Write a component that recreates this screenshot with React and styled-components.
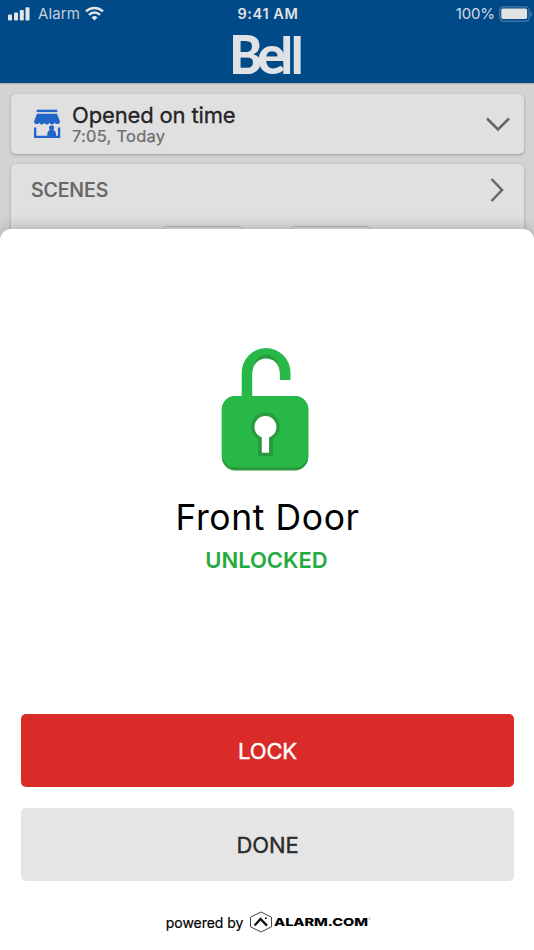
import React from "react";
import styled, { createGlobalStyle } from "styled-components";

const GlobalStyle = createGlobalStyle`
  *, *::before, *::after { box-sizing: border-box; }
  html, body { margin: 0; padding: 0; }
  body { overflow: hidden; font-family: Inter, "Liberation Sans", sans-serif; }
  svg { display: block; flex: none; overflow: visible; }
`;

const Screen = styled.main`
  position: relative;
  width: 534px;
  height: 950px;
  overflow: hidden;
  background: #d3d3d3;
`;

const Header = styled.header`
  height: 83px;
  background: #004b87;
  color: #e0e2e5;
  box-shadow: 0 1px 1px rgba(0, 0, 0, 0.15);
`;

const StatusBar = styled.div`
  display: grid;
  grid-template-columns: 1fr auto 1fr;
  align-items: center;
  height: 27px;
  padding: 0 2px 0 8px;
  font-size: 15px;
  line-height: 27px;
`;

const StatusGroup = styled.div`
  display: flex;
  align-items: center;
  justify-content: ${(p) => (p.$end ? "flex-end" : "flex-start")};
  gap: ${(p) => p.$gap}px;
`;

const Carrier = styled.span`
  color: #c3d0dd;
  letter-spacing: 0.1px;
`;

const Clock = styled.time`
  margin-right: 4px;
  font-weight: 600;
  font-size: 14.5px;
  letter-spacing: 0.6px;
`;

const Percent = styled.span`
  color: #d3dbe2;
  letter-spacing: -0.1px;
`;

const LogoRow = styled.div`
  display: flex;
  justify-content: center;
  height: 56px;
`;

const Content = styled.div`
  display: flex;
  flex-direction: column;
  gap: 10px;
  padding: 11px 10.5px 0 10.5px;
`;

const Card = styled.section`
  height: ${(p) => p.$height}px;
  border-radius: 5px;
  background: #e0e0e0;
  box-shadow: 0 1px 3px rgba(0, 0, 0, 0.28);
`;

const StatusRow = styled.div`
  display: flex;
  align-items: center;
  height: 100%;
  padding: 0 14px 0 22px;
`;

const StatusText = styled.div`
  flex: 1;
  padding-left: 11.5px;
`;

const StatusTitle = styled.div`
  color: #242424;
  font-size: 22px;
  line-height: 24px;
  letter-spacing: -0.15px;
  white-space: nowrap;
  -webkit-text-stroke: 0.3px currentColor;
`;

const StatusTime = styled.div`
  color: #6c6c6c;
  font-size: 16.5px;
  line-height: 19px;
  letter-spacing: 0.25px;
  -webkit-text-stroke: 0.2px currentColor;
`;

const ScenesHeader = styled.div`
  display: flex;
  align-items: center;
  justify-content: space-between;
  height: 52px;
  padding: 0 20px 0 20.5px;
`;

const SectionTitle = styled.h2`
  margin: 0;
  color: #666;
  font-size: 19.5px;
  font-weight: 500;
  letter-spacing: -0.1px;
  -webkit-text-stroke: 0.2px currentColor;
`;

const SceneTiles = styled.div`
  display: flex;
  justify-content: center;
  gap: 46px;
  padding-top: 10px;
`;

const SceneTile = styled.div`
  width: 82px;
  height: 60px;
  border: 1px solid #bdbdbd;
  border-radius: 5px;
`;

const Sheet = styled.section`
  position: absolute;
  inset: 229px 0 0;
  display: flex;
  flex-direction: column;
  align-items: center;
  padding: 118px 20px 0 21px;
  border-radius: 11px 11px 0 0;
  background: #fff;
  box-shadow: 0 0 16px rgba(0, 0, 0, 0.28);
`;

const DeviceName = styled.h1`
  margin: 24px 0 0;
  color: #000;
  font-size: 35.5px;
  font-weight: 400;
  line-height: 46px;
  letter-spacing: 0.6px;
`;

const DeviceState = styled.div`
  height: 38px;
  margin-right: 2px;
  color: #22ab3e;
  font-size: 22px;
  font-weight: 600;
  line-height: 38px;
`;

const Actions = styled.div`
  display: flex;
  flex-direction: column;
  gap: 21px;
  width: 100%;
  margin-top: 135px;
`;

const ActionButton = styled.button`
  height: 73px;
  padding: 0;
  border: 0;
  border-radius: 5px;
  background: ${(p) => (p.$danger ? "#d92b28" : "#e5e5e5")};
  color: ${(p) => (p.$danger ? "#fff" : "#2c2c2c")};
  font: 400 22px Inter, sans-serif;
  letter-spacing: -0.1px;
  -webkit-text-stroke: 0.4px currentColor;
`;

const Footer = styled.footer`
  display: flex;
  align-items: center;
  gap: 6px;
  margin: 29px 0 0 2px;
  height: 24px;
  color: #000;
  font-size: 14px;
  letter-spacing: -0.05px;
  white-space: nowrap;
  -webkit-text-stroke: 0.2px currentColor;
`;

const SignalIcon = () => (
  <svg width="22" height="14" viewBox="0 0 22 14" fill="#e3e5e7">
    <rect x="0" y="7.5" width="4" height="6" rx="1" />
    <rect x="6" y="5.5" width="4" height="8" rx="1" />
    <rect x="11.8" y="3" width="4" height="10.5" rx="1" />
    <rect x="17.5" y="0.3" width="4" height="13.2" rx="1" />
  </svg>
);

const WifiIcon = () => (
  <svg width="19" height="14" viewBox="0 0 19 14" fill="none" stroke="#e3e5e7" strokeWidth="2.5">
    <path d="M1 4.4a12.2 12.2 0 0 1 17 0" />
    <path d="M4 7.8a7.9 7.9 0 0 1 11 0" />
    <path d="M9.5 13.4 6.5 10.4a4.3 4.3 0 0 1 6 0z" fill="#e3e5e7" stroke="none" />
  </svg>
);

const BatteryIcon = () => (
  <svg width="33" height="16" viewBox="0 0 33 16">
    <rect x="0.8" y="0.9" width="29.4" height="14.2" rx="3.6" fill="none" stroke="#477cab" strokeWidth="1.2" />
    <rect x="2.3" y="2.6" width="25.8" height="10.4" rx="1.7" fill="#e3e3e3" />
    <path d="M31.4 5.4a2.8 2.8 0 0 1 0 5.2z" fill="#477cab" />
  </svg>
);

const BellLogo = () => (
  <svg width="80" height="56" viewBox="0 0 80 56" aria-label="Bell">
    <g fill="#e0e2e5" fontFamily="Lato, sans-serif" fontWeight="900" fontSize="53">
      <text transform="translate(2.3 47.2) scale(.94 1)">B</text>
      <text transform="translate(30.300 47.200) scale(1 1)">e</text>
      <text transform="translate(53.500 47.200) scale(.92 .975)">l</text>
      <text transform="translate(64.100 47.200) scale(.92 .975)">l</text>
    </g>
  </svg>
);

const StoreIcon = () => (
  <svg width="28" height="30" viewBox="0 0 28 30" fill="#2265c8">
    <path d="M3.700.7h20.600v2.400H3.700z" />
    <path d="M4 4.800h20l3 7.700c0 3.200-4.800 3.500-5.300.7-.4 3-4.800 3-5.200 0-.5 3-4.800 3-5.200 0-.4 3-4.800 3-5.200 0C5.700 16 1 15.700 1 12.500z" />
    <path d="M1 18.500h2.300v8.200h11c-.4-3.300 1-5.400 3-5.700-2.300-1.500-1.200-4.800 1.300-4.800s3.600 3.300 1.300 4.800c2 .3 3.600 2.400 3.200 5.700h1.800v-8.200h2.300v10.500H1z" />
  </svg>
);

const ChevronIcon = ({ right }) => (
  <svg width={right ? 14 : 24} height={right ? 24 : 14} viewBox={right ? "0 0 14 24" : "0 0 24 14"} fill="none" stroke="#666" strokeWidth="2.5">
    <path d={right ? "M1.500 1 12 12 1.500 23" : "M1 1.500 12 12.500 23 1.500"} />
  </svg>
);

const UnlockedIcon = () => (
  <svg width="93" height="124" viewBox="0 0 93 124">
    <path d="M20.700 51V25.500a24.400 24.400 0 0 1 48.800 0V33H58.700V24H31.500v27z" fill="#27b848" />
    <path d="M31.500 26c0-24.500 27.200-24.500 27.200 0z" fill="#289a3d" />
    <path d="M31.500 49V26c0-19.500 27.200-19.500 27.200 0v7" fill="#fff" />
    <rect x=".8" y="49" width="86.500" height="74.500" rx="13.500" fill="#289a3d" />
    <rect x=".8" y="49" width="86.500" height="71.500" rx="13.500" fill="#27b848" />
    <path d="M37 91.800a14.200 14.200 0 1 1 14.900 0V109H37z" fill="#289a3d" />
    <path d="M40.800 90.300a11 11 0 1 1 7.300 0v15.400h-7.300z" fill="#fff" />
  </svg>
);

const AlarmLogo = () => (
  <svg width="122" height="22" viewBox="0 0 122 22" aria-label="Alarm.com">
    <path d="M12 1 22.500 6.200V15.800L12 21 1.500 15.800V6.200z" fill="none" stroke="#444" strokeWidth="1" strokeLinejoin="round" />
    <path d="M5.500 14.600 11.500 8l6.500 6.600" fill="none" stroke="#111" strokeWidth="2.300" />
    <circle cx="16.800" cy="7.300" r="1" fill="#111" />
    <text x="25" y="15" textLength="94" lengthAdjust="spacingAndGlyphs" fontFamily="Inter, sans-serif" fontSize="11" fontWeight="800">ALARM.COM</text>
    <circle cx="120.500" cy="7.700" r=".8" fill="none" stroke="#777" strokeWidth=".4" />
  </svg>
);

export default function App() {
  return (
    <Screen>
      <GlobalStyle />
      <Header>
        <StatusBar>
          <StatusGroup $gap={8}>
            <SignalIcon />
            <StatusGroup $gap={5}>
              <Carrier>Alarm</Carrier>
              <WifiIcon />
            </StatusGroup>
          </StatusGroup>
          <Clock>9:41 AM</Clock>
          <StatusGroup $end $gap={4}>
            <Percent>100%</Percent>
            <BatteryIcon />
          </StatusGroup>
        </StatusBar>
        <LogoRow>
          <BellLogo />
        </LogoRow>
      </Header>
      <Content>
        <Card $height={60}>
          <StatusRow>
            <StoreIcon />
            <StatusText>
              <StatusTitle>Opened on time</StatusTitle>
              <StatusTime>7:05, Today</StatusTime>
            </StatusText>
            <ChevronIcon />
          </StatusRow>
        </Card>
        <Card $height={140}>
          <ScenesHeader>
            <SectionTitle>SCENES</SectionTitle>
            <ChevronIcon right />
          </ScenesHeader>
          <SceneTiles>
            <SceneTile />
            <SceneTile />
          </SceneTiles>
        </Card>
      </Content>
      <Sheet>
        <UnlockedIcon />
        <DeviceName>Front Door</DeviceName>
        <DeviceState>UNLOCKED</DeviceState>
        <Actions>
          <ActionButton $danger>LOCK</ActionButton>
          <ActionButton>DONE</ActionButton>
        </Actions>
        <Footer>
          <span>powered by</span>
          <AlarmLogo />
        </Footer>
      </Sheet>
    </Screen>
  );
}
